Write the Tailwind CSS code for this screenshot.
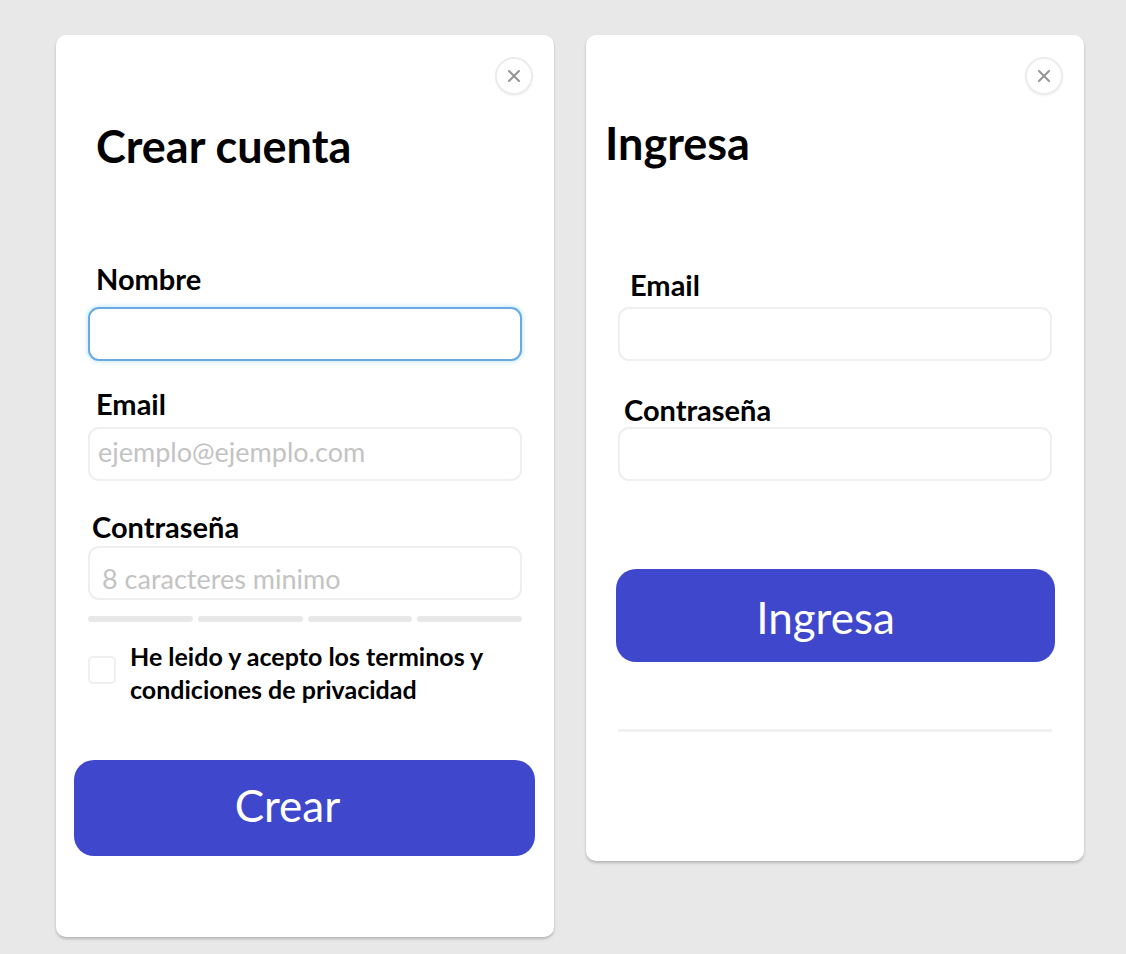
<!DOCTYPE html>
<html lang="es">
<head>
<meta charset="utf-8">
<meta name="viewport" content="width=device-width, initial-scale=1">
<title>Crear cuenta / Ingresa</title>
<script src="https://cdn.jsdelivr.net/npm/@tailwindcss/browser@4"></script>
</head>
<body class="min-h-screen bg-[#e8e8e8] font-[Lato,sans-serif] text-black">
<main class="grid grid-cols-2 items-start gap-8 pt-[35px] pb-4 pl-14 pr-[42px]">

  <form class="flex flex-col rounded-[10px] bg-white px-8 pt-[22px] pb-[81px] shadow-[0_2px_3px_rgba(0,0,0,0.22)]">
    <button type="button" aria-label="Cerrar" class="-mr-[11px] flex size-[38px] items-center justify-center self-end rounded-full border-2 border-[#ececec] bg-white shadow-[0_1px_2px_rgba(0,0,0,0.06)]">
      <svg class="size-3" viewBox="0 0 12 12" fill="none" stroke="#959595" stroke-width="2" stroke-linecap="round"><path d="M1 1l10 10M11 1L1 11"/></svg>
    </button>
    <h1 class="mt-[27px] mb-[93px] pl-2 text-[45px]/[48px] font-bold">Crear cuenta</h1>

    <label for="nombre" class="mb-3 pl-2 text-[29px]/[32px] font-bold">Nombre</label>
    <input id="nombre" type="text" class="h-[54px] w-full rounded-[11px] border-2 border-[#6aaae0] bg-white px-2 text-[27px] shadow-[0_0_4px_1px_#c4e8fb] outline-none">

    <label for="email" class="mt-[27px] mb-[7px] pl-2 text-[29px]/[32px] font-bold">Email</label>
    <input id="email" type="email" placeholder="ejemplo@ejemplo.com" class="h-[54px] w-full rounded-[11px] border-2 border-[#efefef] bg-white px-2 pb-[6px] text-[27px] outline-none placeholder:text-[#c3c3c3]">

    <label for="clave" class="mt-[30px] mb-[3px] pl-1 text-[29px]/[32px] font-bold">Contraseña</label>
    <input id="clave" type="password" placeholder="8 caracteres minimo" class="h-[54px] w-full rounded-[11px] border-2 border-[#efefef] bg-white px-3 pt-[10px] text-[27px] outline-none placeholder:text-[#c3c3c3]">

    <div class="mt-4 grid grid-cols-4 gap-[5px]">
      <span class="h-[6px] rounded-full bg-[#e8e8e8]"></span>
      <span class="h-[6px] rounded-full bg-[#e8e8e8]"></span>
      <span class="h-[6px] rounded-full bg-[#e8e8e8]"></span>
      <span class="h-[6px] rounded-full bg-[#e8e8e8]"></span>
    </div>

    <div class="mt-[18px] flex items-start gap-[14px]">
      <input id="acepto" type="checkbox" class="mt-4 size-7 shrink-0 appearance-none rounded-[5px] border-2 border-[#efefef] bg-white checked:bg-[#3f48cc]">
      <label for="acepto" class="text-[25px]/[33px] font-bold">He leido y acepto los terminos y<br>condiciones de privacidad</label>
    </div>

    <button type="submit" class="-mr-[13px] -ml-[14px] mt-[54px] h-24 rounded-[20px] bg-[#3f48cc] pr-[34px] pb-[6px] text-[44px]/[48px] text-white">Crear</button>
  </form>

  <form class="flex flex-col rounded-[10px] bg-white px-8 pt-[22px] pb-[129px] shadow-[0_2px_3px_rgba(0,0,0,0.22)]">
    <button type="button" aria-label="Cerrar" class="-mr-[11px] flex size-[38px] items-center justify-center self-end rounded-full border-2 border-[#ececec] bg-white shadow-[0_1px_2px_rgba(0,0,0,0.06)]">
      <svg class="size-3" viewBox="0 0 12 12" fill="none" stroke="#959595" stroke-width="2" stroke-linecap="round"><path d="M1 1l10 10M11 1L1 11"/></svg>
    </button>
    <h2 class="-ml-[13px] mt-6 mb-[102px] text-[45px]/[48px] font-bold">Ingresa</h2>

    <label for="email2" class="mb-[6px] pl-3 text-[29px]/[32px] font-bold">Email</label>
    <input id="email2" type="email" class="h-[54px] w-full rounded-[11px] border-2 border-[#efefef] bg-white px-2 text-[27px] outline-none">

    <label for="clave2" class="mt-[33px] mb-px pl-[6px] text-[29px]/[32px] font-bold">Contraseña</label>
    <input id="clave2" type="password" class="h-[54px] w-full rounded-[11px] border-2 border-[#efefef] bg-white px-2 text-[27px] outline-none">

    <button type="submit" class="-mr-[3px] -ml-[2px] mt-[88px] h-[93px] rounded-[20px] bg-[#3f48cc] pt-[2px] pr-5 text-[44px]/[48px] text-white">Ingresa</button>
    <hr class="mt-[67px] border-t-[3px] border-[#f1f1f1]">
  </form>

</main>
</body>
</html>
